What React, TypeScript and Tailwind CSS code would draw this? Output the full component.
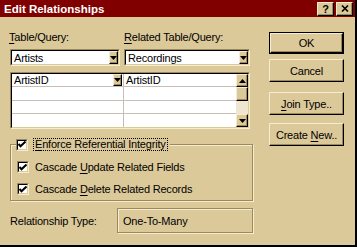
import React from 'react';

const raised =
  'bg-[#dcc99a] border border-t-[#f6edcf] border-l-[#f6edcf] border-r-black border-b-black shadow-[inset_-1px_-1px_0_#9c8a5e]';
const sunken =
  'border border-t-[#9c8a5e] border-l-[#9c8a5e] border-r-[#f6edcf] border-b-[#f6edcf]';

function Arrow({ up = false }: { up?: boolean }) {
  return (
    <svg width="7" height="4" viewBox="0 0 7 4" className={up ? 'rotate-180' : ''}>
      <path d="M0 0h7L3.5 4z" fill="#000" />
    </svg>
  );
}

function DropButton({ className = '' }: { className?: string }) {
  return (
    <div className={`${raised} flex items-center justify-center ${className}`}>
      <Arrow />
    </div>
  );
}

function U({ children }: { children: React.ReactNode }) {
  return <span className="underline underline-offset-2">{children}</span>;
}

function Check() {
  return (
    <div className={`${sunken} w-[12px] h-[12px] bg-white shrink-0`}>
      <div className="w-full h-full border border-t-black border-l-black border-r-[#dcc99a] border-b-[#dcc99a] flex items-center justify-center">
        <svg width="8" height="7" viewBox="0 0 8 7">
          <path d="M0.5 3l2 2.2L7.5 0.5" stroke="#000" strokeWidth="2" fill="none" />
        </svg>
      </div>
    </div>
  );
}

function Btn({ children, isDefault = false, className = '' }: { children: React.ReactNode; isDefault?: boolean; className?: string }) {
  const inner = (
    <div className={`${raised} flex items-center justify-center w-full h-full`}>
      <span>{children}</span>
    </div>
  );
  return (
    <div className={`w-[75px] ${className}`}>
      {isDefault ? <div className="border border-black w-full h-full">{inner}</div> : inner}
    </div>
  );
}

export default function App() {
  return (
    <div className="w-[357px] h-[247px] bg-[#dcc99a] border-r-2 border-b-2 border-black overflow-hidden text-[11px] tracking-[-0.2px] text-black font-['Liberation_Sans',Arial,sans-serif] leading-[12px]">
      {/* Title bar */}
      <div className="h-[17px] bg-[#800000] flex items-center pl-[4px] pr-[2px]">
        <span className="text-white font-bold text-[11.5px] tracking-normal">Edit Relationships</span>
        <div className="ml-auto flex gap-[2px]">
          <div className={`${raised} w-[17px] h-[14px] flex items-center justify-center font-bold text-[11px] tracking-normal`}>?</div>
          <div className={`${raised} w-[17px] h-[14px] flex items-center justify-center`}>
            <svg width="8" height="7" viewBox="0 0 8 7">
              <path d="M1 0.5l6 6M7 0.5l-6 6" stroke="#000" strokeWidth="1.6" />
            </svg>
          </div>
        </div>
      </div>

      <div className="flex pl-[10px]">
        {/* Left column */}
        <div className="w-[243px] flex flex-col">
          <div className="flex mt-[14px] h-[12px]">
            <span className="w-[114px] -ml-[1px]"><U>T</U>able/Query:</span>
            <span className="ml-[1px]"><U>R</U>elated Table/Query:</span>
          </div>

          <div className="flex mt-[6px] h-[17px]">
            <div className={`${sunken} w-[110px] h-full`}>
              <div className="h-full border border-t-black border-l-black border-r-[#dcc99a] border-b-[#dcc99a] bg-white flex items-center pl-[2px]">
                <span className="flex-1">Artists</span>
                <DropButton className="w-[9px] h-[13px]" />
              </div>
            </div>
            <div className={`${sunken} w-[126px] h-full ml-[4px]`}>
              <div className="h-full border border-t-black border-l-black border-r-[#dcc99a] border-b-[#dcc99a] bg-white flex items-center pl-[2px]">
                <span className="flex-1">Recordings</span>
                <DropButton className="w-[9px] h-[13px]" />
              </div>
            </div>
          </div>

          {/* Grid */}
          <div className={`${sunken} w-[240px] h-[57px] mt-[6px]`}>
            <div className="h-full border border-t-black border-l-black border-r-[#dcc99a] border-b-[#dcc99a] bg-white flex">
              <div className="flex-1 flex flex-col">
                {[0, 1, 2, 3].map((r) => (
                  <div key={r} className={`flex h-[14px] ${r < 3 ? 'border-b border-[#c4c0b8]' : ''}`}>
                    <div className="w-[112px] border-r border-[#c4c0b8] flex items-center pl-[2px]">
                      {r === 0 && (
                        <>
                          <span className="flex-1">ArtistID</span>
                          <DropButton className="w-[9px] h-[12px] mr-[1px]" />
                        </>
                      )}
                    </div>
                    <div className="flex-1 flex items-center pl-[2px]">{r === 0 && 'ArtistID'}</div>
                  </div>
                ))}
              </div>
              {/* Scrollbar */}
              <div className="w-[12px] flex flex-col">
                <div className={`${raised} h-[13px] flex items-center justify-center`}><Arrow up /></div>
                <div className={`${raised} h-[14px]`} />
                <div className="flex-1 bg-[#efe6cf]" />
                <div className={`${raised} h-[13px] flex items-center justify-center`}><Arrow /></div>
              </div>
            </div>
          </div>

          {/* Group box */}
          <div className="relative mt-[15px] w-[243px] h-[57px] border border-[#9c8a5e] shadow-[1px_1px_0_#f6edcf,inset_1px_1px_0_#f6edcf]">
            <div className="absolute -top-[7px] left-[5px] flex items-center bg-[#dcc99a] pr-[2px]">
              <Check />
              <span className="ml-[5px] px-[1px] border border-dotted border-black leading-[11px]"><U>E</U>nforce Referential Integrity</span>
            </div>
            <div className="flex flex-col pl-[6px] pt-[16px] gap-[10px]">
              <div className="flex items-center">
                <Check />
                <span className="ml-[6px]">Cascade <U>U</U>pdate Related Fields</span>
              </div>
              <div className="flex items-center">
                <Check />
                <span className="ml-[6px]">Cascade <U>D</U>elete Related Records</span>
              </div>
            </div>
          </div>

          <div className="flex items-center mt-[7px]">
            <span className="w-[107px]">Relationship Type:</span>
            <div className="w-[136px] h-[25px] border border-[#9c8a5e] shadow-[1px_1px_0_#f6edcf,inset_1px_1px_0_#f6edcf] flex items-center pl-[5px]">
              One-To-Many
            </div>
          </div>
        </div>

        {/* Right column */}
        <div className="ml-[16px] flex flex-col">
          <Btn isDefault className="h-[22px] mt-[15px]">OK</Btn>
          <Btn className="h-[23px] mt-[5px]">Cancel</Btn>
          <Btn className="h-[23px] mt-[10px]"><U>J</U>oin Type..</Btn>
          <Btn className="h-[23px] mt-[8px]">Create <U>N</U>ew..</Btn>
        </div>
      </div>
    </div>
  );
}
